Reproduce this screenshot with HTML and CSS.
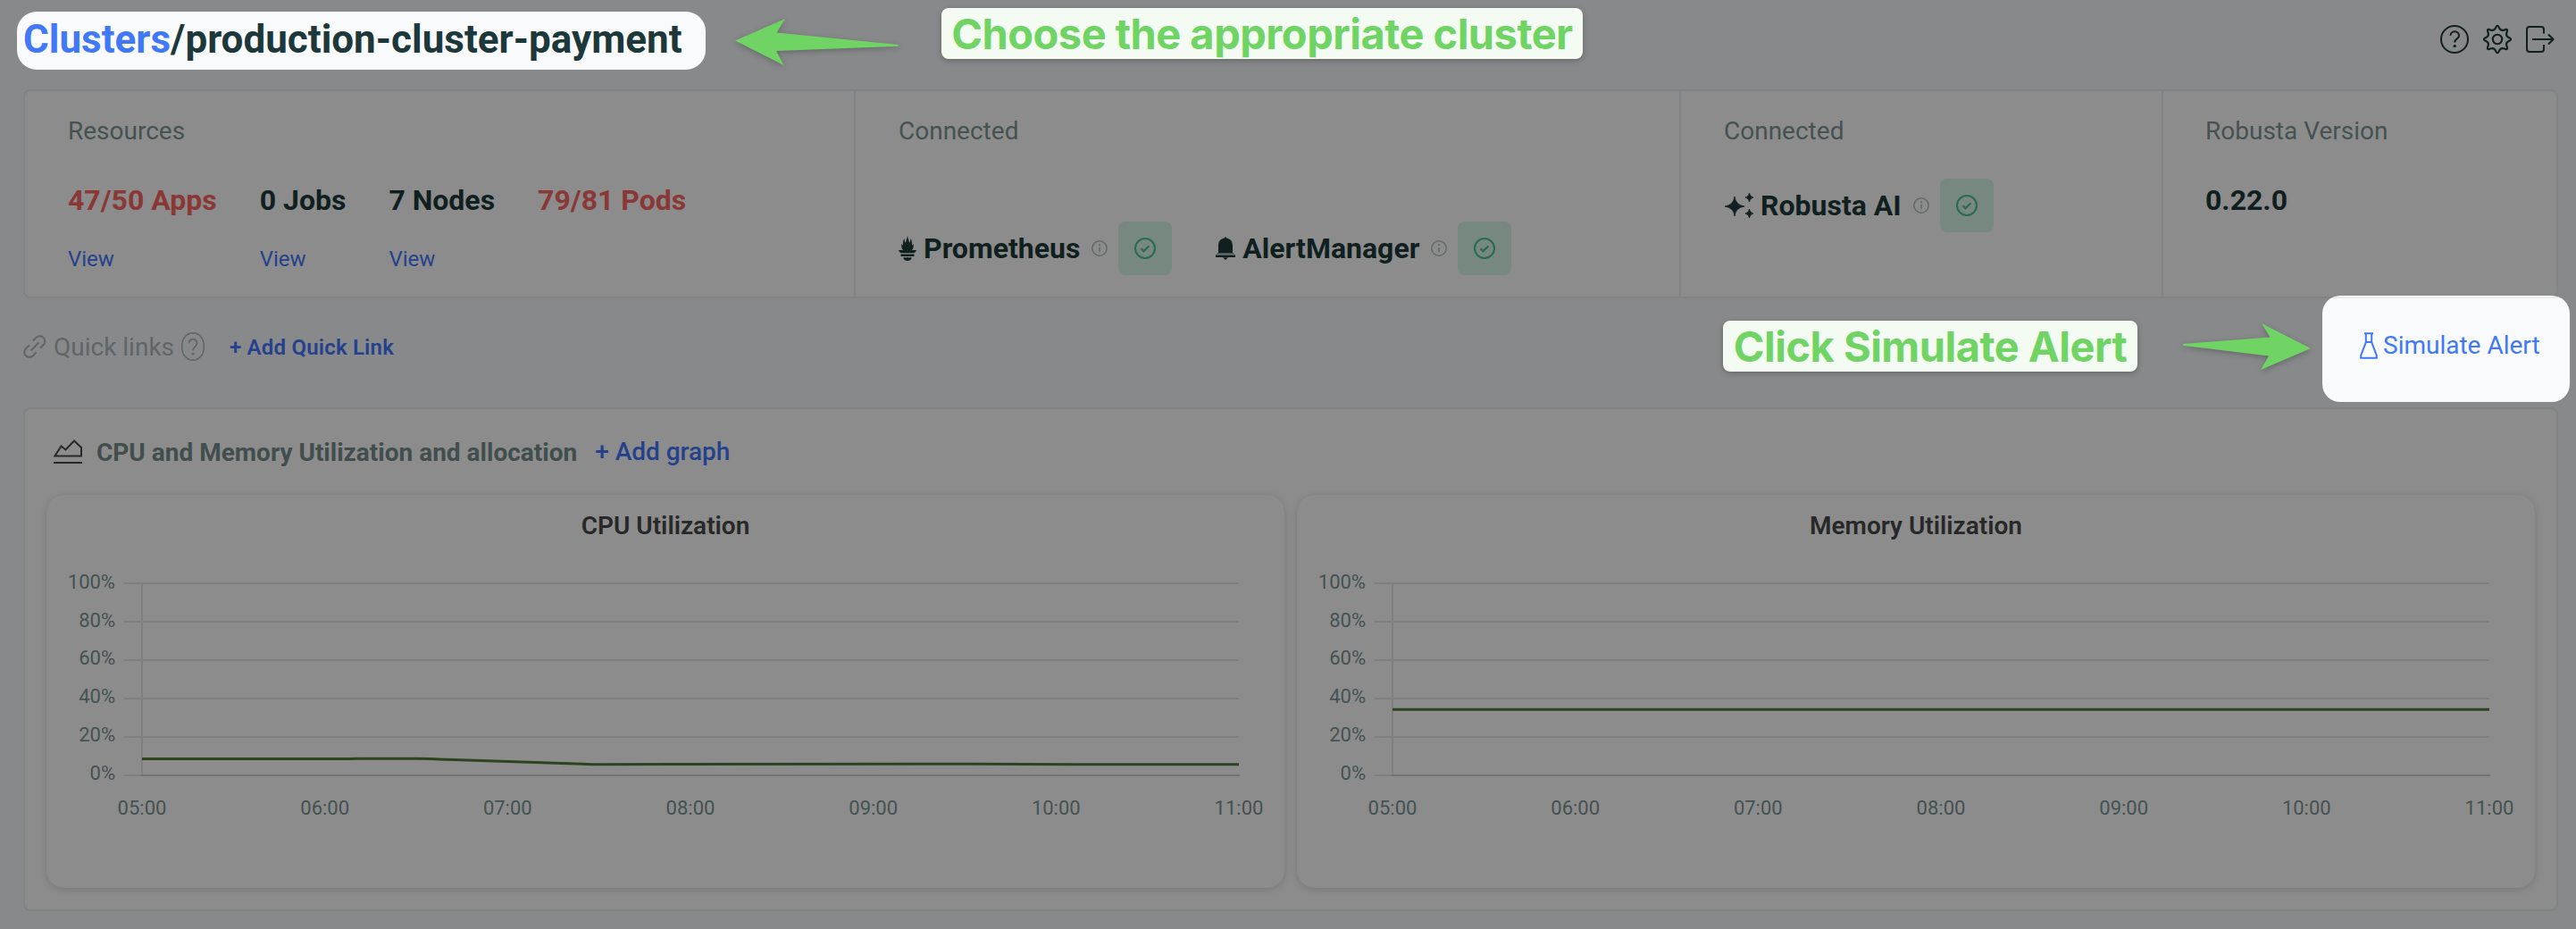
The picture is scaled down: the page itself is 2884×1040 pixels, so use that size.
FILE: index.html
```html
<!DOCTYPE html>
<html lang="en">
<head>
<meta charset="utf-8">
<title>production-cluster-payment</title>
<link rel="stylesheet" href="styles.css">
</head>
<body>
<svg class="defs" width="0" height="0">
  <symbol id="info" viewBox="0 0 20 20"><circle cx="10" cy="10" r="8.2" fill="none" stroke="currentColor" stroke-width="1.5"/><path d="M10 9v5.2" stroke="currentColor" stroke-width="1.6"/><circle cx="10" cy="6.2" r="1.1" fill="currentColor"/></symbol>
  <symbol id="check" viewBox="0 0 24 24"><circle cx="12" cy="12" r="11" fill="none" stroke="currentColor" stroke-width="2"/><path d="M7.6 12.2l2.900 2.900 5.700-5.600" fill="none" stroke="currentColor" stroke-width="2.300"/></symbol>
</svg>

<header class="topbar">
  <h1 class="crumbs"><a>Clusters</a><span>/production-cluster-payment</span></h1>
  <nav class="actions">
    <svg width="32" height="32" viewBox="-16 -16 32 32"><circle r="15" fill="none" stroke="currentColor" stroke-width="2"/><path d="M-4.6 -4.1a4.8 4.4 0 1 1 7.6 3.3C1.2 .4 .2 1.4 .2 3.4" fill="none" stroke="currentColor" stroke-width="2"/><circle cx=".2" cy="7.6" r="1.7" fill="currentColor"/></svg>
    <svg width="32" height="32" viewBox="-16 -16 32 32"><path d="M-1.82-13.14Q0-17.5 1.82-13.14Q3.64-8.78 8-10.58Q12.37-12.37 10.58-8Q8.78-3.64 13.14-1.82Q17.5 0 13.14 1.82Q8.78 3.64 10.58 8Q12.37 12.37 8 10.58Q3.64 8.78 1.82 13.14Q0 17.5-1.82 13.14Q-3.64 8.78-8 10.58Q-12.37 12.37-10.58 8Q-8.78 3.64-13.14 1.82Q-17.5 0-13.14-1.82Q-8.78-3.64-10.58-8Q-12.37-12.37-8-10.58Q-3.64-8.78-1.82-13.14Z" fill="none" stroke="currentColor" stroke-width="2.1" stroke-linejoin="round"/><circle r="5.2" fill="none" stroke="currentColor" stroke-width="2.1"/></svg>
    <svg width="32" height="32" viewBox="0 0 32 32"><path d="M20 9.500V5a3 3 0 0 0-3-3H4a3 3 0 0 0-3 3v22a3 3 0 0 0 3 3h13a3 3 0 0 0 3-3v-5M7 16h23M25 10.500l5.600 5.500-5.600 5.500" fill="none" stroke="currentColor" stroke-width="2" stroke-linejoin="round"/></svg>
  </nav>
</header>

<section class="summary">
  <div class="cell resources">
    <div class="label">Resources</div>
    <div class="stats">
      <div class="stat"><b class="bad">47/50 Apps</b><a>View</a></div>
      <div class="stat"><b>0 Jobs</b><a>View</a></div>
      <div class="stat"><b>7 Nodes</b><a>View</a></div>
      <div class="stat"><b class="bad">79/81 Pods</b></div>
    </div>
  </div>
  <div class="cell monitors">
    <div class="label">Connected</div>
    <div class="services low">
      <div class="service">
        <svg class="logo" width="20" height="28" viewBox="0 0 20 28"><path d="M10 0c.4 3 1.700 5 2 8 1-1.500 1.700-3.500 1.500-5.500 1.500 3.500 1.800 6 1.500 8.500l1.500-2c.6 3.500-.2 5.500-1.400 7H20c-.5 1.500-1.500 2.500-2.500 3.200h-15C1.500 18.500.5 17.500 0 16h4.900C3.700 14.500 2.900 12.500 3.500 9L5 11c-.3-2.500 0-5 1.500-8.500C6.300 4.500 7 6.500 8 8c.3-3 1.600-5 2-8z" fill="currentColor"/><path d="M2.500 20.500h15v2.400h-15zM5.300 24.200h9.400Q14 28 10 28T5.300 24.200z" fill="currentColor"/></svg>
        <b>Prometheus</b>
        <svg class="info" width="20" height="20"><use href="#info"/></svg>
        <span class="badge"><svg width="24" height="24"><use href="#check"/></svg></span>
      </div>
      <div class="service">
        <svg class="logo bell" width="22" height="26" viewBox="0 0 22 26"><path d="M11 0l1.300 1.600C16.500 2.500 19 5.500 19 10v8H3v-8c0-4.500 2.500-7.500 6.700-8.400zM0 20.500h22V23H0zM8 23.200h6L11 26z" fill="currentColor"/><path d="M2.500 18h17l1.700 1.400H.8z" fill="currentColor" opacity=".55"/></svg>
        <b>AlertManager</b>
        <svg class="info" width="20" height="20"><use href="#info"/></svg>
        <span class="badge"><svg width="24" height="24"><use href="#check"/></svg></span>
      </div>
    </div>
  </div>
  <div class="cell ai">
    <div class="label">Connected</div>
    <div class="services">
      <div class="service">
        <svg class="logo sparkle" width="32" height="28" viewBox="0 0 32 28"><path d="M11 4Q12 13.500 22 15Q12 16.500 11 26Q10 16.500 0 15Q10 13.500 11 4zM27.500 0Q28 4.200 32 5Q28 5.800 27.500 10Q27 5.800 23 5Q27 4.200 27.500 0zM27.500 18Q28 22.200 32 23Q28 23.800 27.500 28Q27 23.800 23 23Q27 22.200 27.500 18z" fill="currentColor" stroke="currentColor" stroke-width=".8"/></svg>
        <b>Robusta AI</b>
        <svg class="info" width="20" height="20"><use href="#info"/></svg>
        <span class="badge"><svg width="24" height="24"><use href="#check"/></svg></span>
      </div>
    </div>
  </div>
  <div class="cell version">
    <div class="label">Robusta Version</div>
    <div class="stats"><div class="stat"><b>0.22.0</b></div></div>
  </div>
</section>

<section class="quick">
  <svg width="26" height="26" viewBox="0 0 26 26"><g fill="none" stroke="currentColor" stroke-width="2"><path d="M8.500 17.500l9-9M11 6.500l3.500-3.500a5.500 5.500 0 0 1 8.200 8L19 14.800M7 11.200L3 15.200a5.500 5.500 0 0 0 8 8l3.500-3.700"/></g></svg>
  <span class="name">Quick links</span>
  <svg class="hint" width="26" height="32" viewBox="0 0 26 32"><rect x=".8" y=".8" width="24.400" height="30.400" rx="12.200" ry="13.500" fill="none" stroke="currentColor" stroke-width="1.500"/><path d="M8.500 12.200a4.500 4.500 0 1 1 7.200 3.600c-1.900 1.400-2.700 2.300-2.700 4.700" fill="none" stroke="currentColor" stroke-width="1.800"/><circle cx="13" cy="24.200" r="1.400" fill="currentColor"/></svg>
  <a>+ Add Quick Link</a>
</section>

<section class="panel">
  <div class="panel-head">
    <svg width="32" height="28" viewBox="0 0 32 28"><path d="M1.300 18.500L8.500 7.500l5 4L23 1.500 31 9v9.500zM0 26h32" fill="none" stroke="currentColor" stroke-width="2"/></svg>
    <b>CPU and Memory Utilization and allocation</b>
    <a>+ Add graph</a>
  </div>
  <div class="charts">
    <figure class="chart">
      <figcaption>CPU Utilization</figcaption>
      <svg width="1386" height="387" viewBox="0 1 1386 387">
        <path class="grid" d="M87 47H1335M87 90H1335M87 133H1335M87 176H1335M87 219H1335M87 262H107M107 48V262"/>
        <path class="axis" d="M106 262H1336"/>
        <path class="line" d="M107 243.600H338L350 243.300H415Q430 243.400 445 244.200L600 249.200Q612 249.900 625 249.800L700 249.500 1040 249.300 1150 249.700H1335"/>
        <g class="yl"><text x="77" y="53">100%</text><text x="77" y="96">80%</text><text x="77" y="138">60%</text><text x="77" y="181">40%</text><text x="77" y="224">20%</text><text x="77" y="267">0%</text></g>
        <g class="xl"><text x="107" y="306">05:00</text><text x="311.700" y="306">06:00</text><text x="516.300" y="306">07:00</text><text x="721" y="306">08:00</text><text x="925.700" y="306">09:00</text><text x="1130.300" y="306">10:00</text><text x="1335" y="306">11:00</text></g>
      </svg>
    </figure>
    <figure class="chart">
      <figcaption>Memory Utilization</figcaption>
      <svg width="1386" height="387" viewBox="0 1 1386 387">
        <path class="grid" d="M87 47H1335M87 90H1335M87 133H1335M87 176H1335M87 219H1335M87 262H107M107 48V262"/>
        <path class="axis" d="M106 262H1336"/>
        <path class="line" d="M107 188.300H1335"/>
        <g class="yl"><text x="77" y="53">100%</text><text x="77" y="96">80%</text><text x="77" y="138">60%</text><text x="77" y="181">40%</text><text x="77" y="224">20%</text><text x="77" y="267">0%</text></g>
        <g class="xl"><text x="107" y="306">05:00</text><text x="311.700" y="306">06:00</text><text x="516.300" y="306">07:00</text><text x="721" y="306">08:00</text><text x="925.700" y="306">09:00</text><text x="1130.300" y="306">10:00</text><text x="1335" y="306">11:00</text></g>
      </svg>
    </figure>
  </div>
</section>

<div class="simulate">
  <svg width="20" height="30" viewBox="0 0 20 30"><path d="M5 1.200h10M6.800 1.200V11L1.200 26v2.800h17.600V26L13.200 11V1.200M6.800 11h6.400" fill="none" stroke="currentColor" stroke-width="2"/></svg>
  <a>Simulate Alert</a>
</div>
<svg class="arrow arrow-left" width="184" height="54" viewBox="0 0 184 54"><path d="M0 25.500L56 1l-9.400 15.500L182.500 30v1.700L46 37l8.500 16z" fill="currentColor"/></svg>
<div class="note note-cluster">Choose the appropriate cluster</div>
<svg class="arrow arrow-right" width="144" height="54" viewBox="0 0 144 54"><path d="M143 29L88 1l9.500 15.500L0 24v1.700L96 37.500 87 53z" fill="currentColor"/></svg>
<div class="note note-simulate">Click Simulate Alert</div>
</body>
</html>
```
FILE: styles.css
```css
* { box-sizing: border-box; }
body {
  margin: 0;
  width: 2884px;
  height: 1040px;
  padding: 0 20px 0 26px;
  overflow: hidden;
  position: relative;
  background: #88898b;
  color: #101f20;
  font-family: Roboto, "Liberation Sans", sans-serif;
  font-size: 28px;
  white-space: nowrap;
}
svg { display: block; flex: none; }
.defs { position: absolute; }
a { color: #25418b; }
b { font-weight: 700; }

.topbar { height: 100px; display: flex; justify-content: space-between; padding: 13px 4px 0 0; }
.crumbs {
  margin: 0 0 0 -7px;
  height: 65px;
  width: 771px;
  padding-left: 7px;
  border-radius: 22px;
  background: #f8fafc;
  color: #1d383b;
  font-size: 44px;
  font-weight: 700;
  line-height: 63px;
}
.crumbs a { color: #4178f8; }
.actions { display: flex; gap: 16px; padding-top: 15px; }

.summary {
  display: grid;
  grid-template-columns: 930px 924px 540px 1fr;
  width: 2838px;
  height: 234px;
  border: 2px solid #828384;
  border-radius: 8px;
  background: #8c8c8c;
}
.cell { padding: 29px 0 0 48px; border-right: 2px solid #828384; }
.cell:last-child { border-right: 0; padding-left: 47px; }
.label { line-height: 32px; color: #465252; }
.stats { display: flex; gap: 48px; margin-top: 43px; }
.stat { display: flex; flex-direction: column; gap: 34px; }
.stat b { font-size: 32px; line-height: 36px; }
.stat a { font-size: 24px; line-height: 28px; }
.bad { color: #8a3835; }
.services { display: flex; gap: 48px; margin-top: 37px; }
.services.low { margin-top: 85px; }
.service { display: flex; align-items: center; height: 60px; font-size: 32px; }
.logo { margin-right: 8px; }
.bell { margin-left: 1px; }
.sparkle { margin-left: 1px; }
.info { margin: 0 11px 0 12px; color: #626a6a; }
.badge { display: grid; place-items: center; width: 60px; height: 60px; border-radius: 8px; background: #768880; color: #296b4c; }

.quick { height: 108px; margin-bottom: 14px; display: flex; align-items: center; color: #5e6666; }
.quick .name { margin-left: 8px; }
.quick .hint { margin-left: 8px; }
.quick a { margin-left: 28px; padding-top: 1px; font-size: 24px; font-weight: 600; letter-spacing: .2px; }

.panel { width: 2838px; height: 564px; border: 2px solid #828383; border-radius: 8px; background: #8c8c8c; padding: 0 24px; }
.panel-head { height: 96px; padding-left: 8px; display: flex; align-items: center; color: #282828; }
.panel-head b { margin-left: 16px; color: #424e4e; }
.panel-head a { margin-left: 20px; padding-bottom: 2px; font-weight: 500; }
.charts { display: grid; grid-template-columns: 1fr 1fr; gap: 14px; }
.chart { margin: 0; height: 440px; padding-top: 17px; border-radius: 20px; background: #8c8c8c; box-shadow: 0 2px 8px rgba(0, 0, 0, .14); }
.chart figcaption { text-align: center; line-height: 36px; font-weight: 600; color: #282828; }
.chart text { font-size: 22px; fill: #445252; }
.yl { text-anchor: end; }
.xl { text-anchor: middle; }
.grid { stroke: #7f7f7f; stroke-width: 2; fill: none; }
.axis { stroke: #737373; stroke-width: 2; }
.line { stroke: #2d4320; stroke-width: 3; fill: none; }

.simulate {
  position: absolute;
  left: 2600px;
  top: 331px;
  width: 277px;
  height: 119px;
  padding: 0 0 8px 42px;
  display: flex;
  align-items: center;
  gap: 6px;
  border-radius: 20px;
  background: linear-gradient(#fff 1px, #ebecee 1px, #ebecee 3px, transparent 3px) 0 0 / 264px 3px no-repeat, #f8fafc;
  color: #4178f8;
}
.simulate a { color: #4178f8; }
.arrow { position: absolute; color: #70d464; filter: drop-shadow(0 2px 3px rgba(0, 0, 0, .25)); }
.arrow-left { left: 823px; top: 20px; }
.arrow-right { left: 2444px; top: 361px; }
.note {
  position: absolute;
  height: 57px;
  border-radius: 8px;
  background: #f4fbf3;
  color: #70d464;
  font: 700 47px/57px Inter, sans-serif;
  letter-spacing: -.52px;
  text-align: center;
  box-shadow: 0 2px 6px rgba(0, 0, 0, .25);
}
.note-cluster { left: 1054px; top: 9px; width: 718px; }
.note-simulate { left: 1929px; top: 359px; width: 464px; }
```
